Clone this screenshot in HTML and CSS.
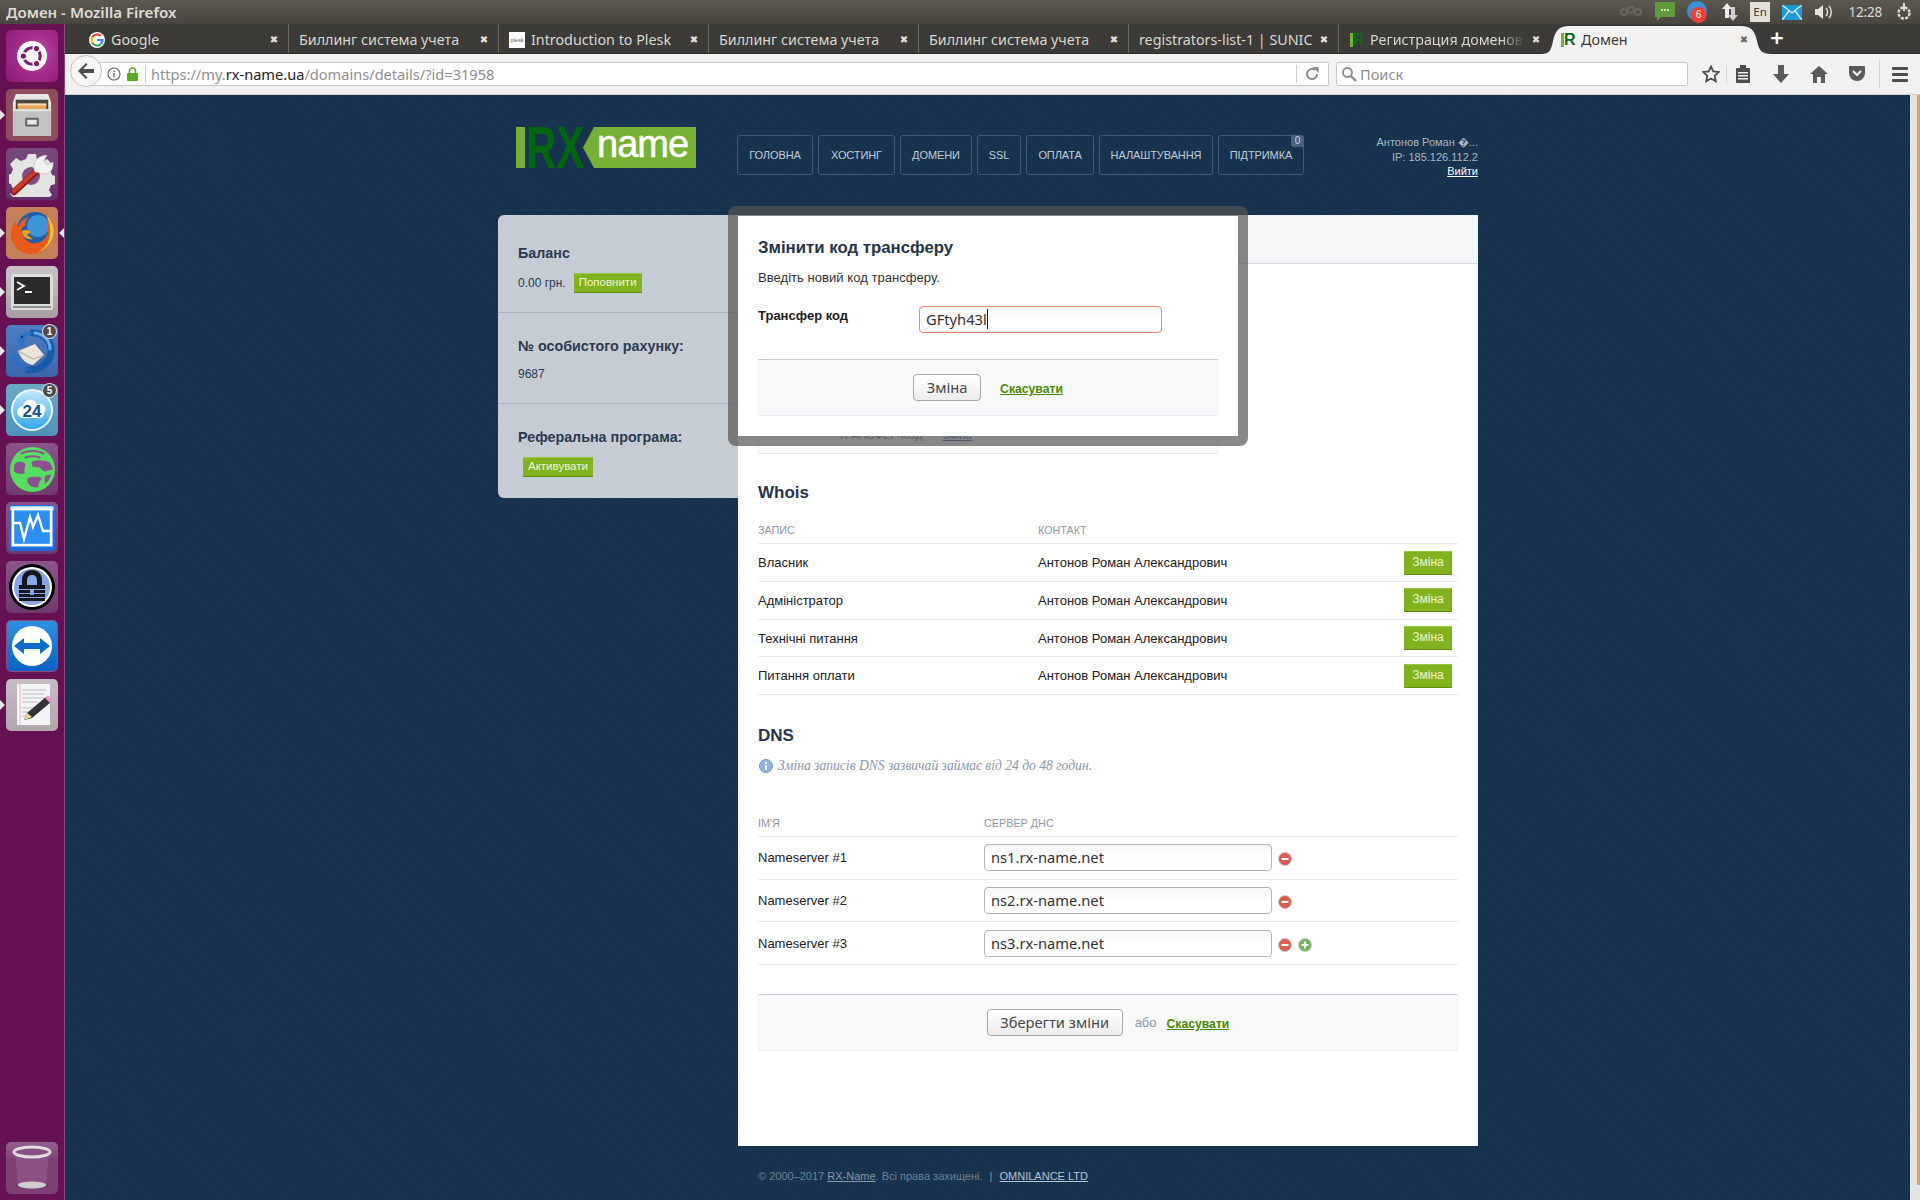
FILE: index.html
```html
<!DOCTYPE html>
<html lang="uk">
<head>
<meta charset="utf-8">
<title>Домен</title>
<link rel="stylesheet" href="styles.css">
</head>
<body>
<div class="desktop">
  <header class="topbar">
    <div class="wintitle">Домен - Mozilla Firefox</div>
    <div class="tray">
      <svg class="tray-i t-link" width="24" height="16" viewBox="0 0 24 16"><g fill="none" stroke="#6f6d66" stroke-width="2"><circle cx="5" cy="8" r="3"/><circle cx="12" cy="6" r="3"/><circle cx="19" cy="8" r="3"/></g></svg>
      <svg class="tray-i t-chat" width="20" height="22" viewBox="0 0 20 22"><path d="M0 1h20v15H6l-4 4v-4H0z" fill="#5f9a3c"/><g fill="#cfe6a8"><rect x="6" y="8" width="2" height="2"/><rect x="9" y="8" width="2" height="2"/><rect x="12" y="8" width="2" height="2"/></g></svg>
      <div class="tray-i t-bubble"><svg width="20" height="22" viewBox="0 0 20 22"><circle cx="10" cy="10" r="10" fill="#3a8fd8"/><circle cx="11.500" cy="14" r="8" fill="#ee4035"/></svg><span class="bubble-num">6</span></div>
      <svg class="tray-i t-arrows" width="18" height="20" viewBox="0 0 18 20"><path d="M6 1l5 6H8v9H4V7H1z" fill="#eee"/><path d="M12 19l-5-6h3V5h4v8h3z" fill="#cfcfcf"/></svg>
      <div class="tray-i t-lang">En</div>
      <svg class="tray-i t-mail" width="20" height="15" viewBox="0 0 20 15"><rect width="20" height="15" fill="#1d9ad6"/><path d="M0 0l10 8 10-8M0 15l7-9M20 15l-7-9" fill="none" stroke="#dff3fb" stroke-width="1.300"/></svg>
      <svg class="tray-i t-vol" width="20" height="18" viewBox="0 0 20 18"><path d="M1 6h3l5-4v14l-5-4H1z" fill="#e6e3dc"/><path d="M12 5c2 2 2 6 0 8M15 3c3 3 3 9 0 12" fill="none" stroke="#dfdbd2" stroke-width="1.500"/></svg>
      <div class="clock">12:28</div>
      <svg class="tray-i t-power" width="18" height="18" viewBox="0 0 18 18"><circle cx="9" cy="10" r="5.500" fill="none" stroke="#dfdbd2" stroke-width="2.500" stroke-dasharray="3 1.300"/><rect x="8" y="0" width="2" height="8" fill="#dfdbd2"/></svg>
    </div>
  </header>

  <div class="workspace">
    <nav class="launcher">
      <div class="tile tile-ubuntu"><svg width="30" height="30" viewBox="0 0 40 40"><circle cx="20" cy="20" r="20" fill="#fff"/><circle cx="20" cy="20" r="11" fill="none" stroke="#7a1e68" stroke-width="4"/><g fill="#7a1e68" stroke="#fff" stroke-width="2"><circle cx="8.500" cy="20" r="4.500"/><circle cx="26" cy="10" r="4.500"/><circle cx="26" cy="30" r="4.500"/></g></svg></div>
      <div class="tile tile-files pip-l"><svg width="42" height="44" viewBox="0 0 44 46"><path d="M5 1h34l3 9v33H2V10z" fill="#e6e6e4"/><rect x="5" y="7" width="34" height="13" fill="#4a4340"/><rect x="7" y="11" width="30" height="8" fill="#e9a65c"/><rect x="7" y="11" width="30" height="2" fill="#f6ddb3"/><path d="M2 17h40v28H2z" fill="#c2c2c0"/><path d="M2 17h40v2H2z" fill="#e2e2e0"/><rect x="15" y="26" width="14" height="9" rx="1" fill="#5f5f5d"/><rect x="17" y="28" width="10" height="5" fill="#e8e8e6"/></svg></div>
      <div class="tile tile-settings"><svg width="46" height="46" viewBox="0 0 46 46"><path d="M19 3h8l1 6 5 2 5-3 6 6-3 5 2 5 4 1v8l-5 1-2 5 3 5-6 5-5-3-5 2-1 4h-8l-1-4-5-2-5 3-6-6 3-5-2-5-5-1v-8l5-1 2-5-3-5 6-6 5 3 5-2z" fill="#e4e4e2"/><circle cx="22" cy="25" r="9" fill="#7f5182"/><path d="M5 41L30 18" stroke="#8f1f1a" stroke-width="6.500" stroke-linecap="round"/><path d="M5 40L30 17" stroke="#cf3a30" stroke-width="4" stroke-linecap="round"/><path d="M26 21c-3-6 0-14 7-16l5-1-3 6 3 4 6-3c1 7-3 12-9 12z" fill="#f2f2f0" stroke="#b5b5b3" stroke-width=".6"/></svg></div>
      <div class="tile tile-firefox pip-l pip-r"><svg width="46" height="46" viewBox="0 0 46 46"><circle cx="26" cy="20" r="18" fill="#1f5ea8"/><circle cx="29" cy="16" r="11" fill="#3f94d6"/><path d="M37 3c7 6 9 15 7 23-3 11-12 18-22 18C11 44 2 35 2 24c0-5 2-10 5-13 0 3 1 5 2 6 2-5 6-9 11-10-3 3-4 6-4 9-3 1-4 3-3 7 1 6 7 11 14 10 8-1 12-7 12-13 0-7-1-12-2-17z" fill="#e85b1d"/><path d="M38 5c6 7 8 15 6 21-2 8-8 14-15 16 7-4 11-10 12-17 1-7-1-13-3-20z" fill="#f8c22a"/><path d="M13 21c3-2 7-1 9 1l-4 3 6 4c-6 1-11-2-11-8z" fill="#f49d20"/></svg></div>
      <div class="tile tile-terminal pip-l"><svg width="42" height="36" viewBox="0 0 42 36"><rect width="42" height="36" rx="2" fill="#dcdcda"/><rect x="3" y="3" width="36" height="27" fill="#2a2a29"/><rect x="2" y="32" width="38" height="2" fill="#8d8d8b"/><path d="M6 8l7 4-7 4" fill="none" stroke="#fff" stroke-width="1.800"/><rect x="14" y="17" width="7" height="2" fill="#fff"/></svg></div>
      <div class="tile tile-thunder pip-l"><svg width="46" height="46" viewBox="0 0 46 46"><path d="M24 5c11 0 18 8 18 18S33 42 20 42" fill="none" stroke="#175aa8" stroke-width="7" stroke-linecap="round"/><path d="M26 5c9 1 15 8 15 16" fill="none" stroke="#6bace6" stroke-width="3" stroke-linecap="round"/><path d="M5 24c2 9 9 16 18 18-9 2-18-5-20-13z" fill="#2470c2"/><path d="M9 23l17-7 9 11-11 10C17 36 12 31 9 23z" fill="#ece6d8"/><path d="M9 23l15 8 11-4" fill="none" stroke="#b9b2a0" stroke-width="1.200"/><path d="M7 11C11 5 18 3 25 5c-4 1-8 4-10 11l-2 3c-2-2-5-4-6-8z" fill="#2a76c8"/><circle cx="13" cy="9" r="1.200" fill="#0b2a55"/></svg><span class="count">1</span></div>
      <div class="tile tile-24 pip-l"><div class="round24"><svg class="cloud" width="32" height="22" viewBox="0 0 32 22"><path d="M8 21c-9 0-9-11-1-12 1-7 11-9 14-2 7-2 11 5 7 9 0 3-2 5-5 5z" fill="#fff"/></svg><span class="num24">24</span></div><span class="count">5</span></div>
      <div class="tile tile-tor"><svg width="47" height="47" viewBox="0 0 48 48"><circle cx="24" cy="24" r="23" fill="#56de62"/><g fill="#8d5092"><path d="M6 18c5-3 9-2 11 1-1 3-2 6-1 9-4 1-8 0-11-2 0-3 0-6 1-8zM23 16c6-2 13-2 19 1l3 7-9 2-5-4-7-1zM19 33c5-2 11-2 15 0-3 3-4 5-4 9-4 0-7 0-9-2-2-2-3-4-2-7zM37 30l6-1c-1 4-3 7-6 10-1-3-1-6 0-9z"/></g><g fill="none" stroke="#8d5092" stroke-width="2"><path d="M12 8c6-4 18-4 24 0M16 12c5-2 12-2 16 0"/></g></svg></div>
      <div class="tile tile-task"><svg width="46" height="46" viewBox="0 0 46 46"><rect width="46" height="46" rx="3" fill="#1f6be0"/><rect x="1" y="1" width="44" height="5" rx="2" fill="#a9d4fb"/><rect x="4" y="4" width="38" height="36" fill="none" stroke="#fff" stroke-width="3"/><rect x="5.500" y="5.500" width="35" height="33" fill="#2a8ff0"/><path d="M5 18h6l4 16 6-22 3 10 5-12 5 16h7" fill="none" stroke="#fff" stroke-width="2.400"/></svg></div>
      <div class="tile tile-keepass"><svg width="48" height="48" viewBox="0 0 48 48"><circle cx="24" cy="24" r="23" fill="#000"/><circle cx="24" cy="24" r="20" fill="#fff"/><circle cx="24" cy="24" r="18" fill="#8aa4e8"/><path d="M14 23v-6c0-6 4-10 10-10s10 4 10 10v6h-5v-6c0-3-2-5-5-5s-5 2-5 5v6z" fill="#15171f"/><g fill="#15171f"><rect x="11" y="22" width="26" height="4"/><rect x="11" y="27" width="26" height="3"/><rect x="11" y="31" width="26" height="3"/><rect x="11" y="35" width="26" height="3"/></g><rect x="22" y="26" width="4" height="6" fill="#8aa4e8"/></svg></div>
      <div class="tile tile-tv"><svg width="42" height="42" viewBox="0 0 42 42"><circle cx="21" cy="21" r="20" fill="#fff"/><path d="M3 21l10-8v5h16v-5l10 8-10 8v-5H13v5z" fill="#0e6ccc"/></svg></div>
      <div class="tile tile-notes pip-l"><svg width="46" height="46" viewBox="0 0 46 46"><rect x="8" y="2" width="33" height="41" fill="#f4f3f6"/><g stroke="#bdbbc2" stroke-width="1"><path d="M13 8h24M13 12h22M13 16h24M13 20h16M13 26h20M13 30h14M13 34h8"/></g><path d="M11 2v41" stroke="#eab4b4"/><path d="M15 38l3-7 19-16 5 5-19 16z" fill="#333337"/><path d="M15 38l3-7 5 4z" fill="#f2dd8f"/><path d="M36 16l3-3 5 5-3 3z" fill="#e59bc8"/></svg></div>
      <div class="tile tile-trash"><svg width="40" height="46" viewBox="0 0 40 46"><path d="M3 7l3 33c4 5 24 5 28 0l3-33z" fill="#8a5284"/><ellipse cx="20" cy="40" rx="14" ry="3.500" fill="#cfcfcd"/><ellipse cx="20" cy="7" rx="18" ry="5" fill="none" stroke="#dededc" stroke-width="3"/></svg></div>
    </nav>

    <div class="window">
      <div class="tabstrip">
        <div class="tab"><svg class="fav" width="16" height="16" viewBox="0 0 16 16"><circle cx="8" cy="8" r="8" fill="#fff"/><g fill="none" stroke-width="2.200"><path d="M3.200 5.200A5.500 5.500 0 0 1 11.800 4" stroke="#ea4335"/><path d="M3.200 10.800a5.500 5.500 0 0 1 0-5.600" stroke="#fbbc05"/><path d="M11.800 12a5.500 5.500 0 0 1-8.600-1.200" stroke="#34a853"/><path d="M8 8h5.500a5.500 5.500 0 0 1-1.700 4" stroke="#4285f4"/></g></svg><span class="tab-title">Google</span><span class="tab-x">✖</span></div>
        <div class="tab"><span class="tab-title">Биллинг система учета</span><span class="tab-x">✖</span></div>
        <div class="tab"><span class="fav fav-plesk">plesk</span><span class="tab-title">Introduction to Plesk</span><span class="tab-x">✖</span></div>
        <div class="tab"><span class="tab-title">Биллинг система учета</span><span class="tab-x">✖</span></div>
        <div class="tab"><span class="tab-title">Биллинг система учета</span><span class="tab-x">✖</span></div>
        <div class="tab"><span class="tab-title">registrators-list-1 | SUNIC</span><span class="tab-x">✖</span></div>
        <div class="tab tab-last"><span class="fav fav-r"><i></i><b>R</b></span><span class="tab-title tab-fade">Регистрация доменов</span><span class="tab-x">✖</span></div>
        <div class="tab tab-active"><svg class="tab-shape" width="231" height="30" viewBox="0 0 231 30"><path d="M0 30c9 0 10-4 12-13C14 7 18 2 28 2h172c10 0 14 5 16 15 2 9 4 13 15 13z" fill="#f2f1ef"/></svg><span class="fav fav-r"><i></i><b>R</b></span><span class="tab-title">Домен</span><span class="tab-x">✖</span></div>
        <div class="tab-new">+</div>
      </div>

      <div class="toolbar">
        <div class="urlbar">
          <div class="backbtn"><svg width="18" height="18" viewBox="0 0 18 18"><path d="M9 1L1 9l8 8 1.500-1.500L6 11h11V7H6l4.500-4.500z" fill="#4d4d4d"/></svg></div>
          <svg class="url-i" width="14" height="14" viewBox="0 0 14 14"><circle cx="7" cy="7" r="6" fill="none" stroke="#6b6b6b" stroke-width="1.200"/><rect x="6.300" y="6" width="1.400" height="4.500" fill="#6b6b6b"/><rect x="6.300" y="3.500" width="1.400" height="1.500" fill="#6b6b6b"/></svg>
          <svg class="url-lock" width="11" height="14" viewBox="0 0 11 14"><path d="M2.500 6V4a3 3 0 0 1 6 0v2" fill="none" stroke="#5ca81f" stroke-width="1.600"/><rect y="6" width="11" height="8" rx="1" fill="#5ca81f"/></svg>
          <span class="url-sep"></span>
          <div class="url-text">https://my.<em>rx-name.ua</em>/domains/details/?id=31958</div>
          <span class="url-sep url-sep2"></span>
          <svg class="url-reload" width="14" height="14" viewBox="0 0 14 14"><path d="M12 7a5 5 0 1 1-2-4" fill="none" stroke="#8b8b8b" stroke-width="2"/><path d="M7.500 0h6v6z" fill="#8b8b8b"/></svg>
        </div>
        <div class="searchbar">
          <svg width="16" height="16" viewBox="0 0 16 16"><circle cx="6.500" cy="6.500" r="4.500" fill="none" stroke="#8b8b8b" stroke-width="1.800"/><path d="M10 10l5 5" stroke="#8b8b8b" stroke-width="2.400"/></svg>
          <span>Поиск</span>
        </div>
        <div class="tools">
          <svg class="tool t-star" width="18" height="18" viewBox="0 0 18 18"><path d="M9 1.500l2.300 5 5.400.6-4 3.700 1.100 5.400L9 13.500l-4.800 2.700 1.100-5.400-4-3.700 5.400-.6z" fill="none" stroke="#4d4d4d" stroke-width="1.800"/></svg>
          <span class="tool-sep"></span>
          <svg class="tool t-clip" width="16" height="18" viewBox="0 0 16 18"><rect x="1" y="3" width="14" height="15" rx="1" fill="#4d4d4d"/><rect x="5" y="0" width="6" height="5" fill="#4d4d4d"/><g fill="#f2f1ef"><rect x="3" y="7" width="10" height="1.500"/><rect x="3" y="10" width="10" height="1.500"/><rect x="3" y="13" width="10" height="1.500"/></g></svg>
          <svg class="tool t-down" width="16" height="18" viewBox="0 0 16 18"><path d="M5 0h6v9h5l-8 9-8-9h5z" fill="#5a5a5a"/></svg>
          <svg class="tool t-home" width="18" height="18" viewBox="0 0 18 18"><path d="M9 1l9 8h-3v9h-4v-6H7v6H3V9H0z" fill="#5a5a5a"/></svg>
          <svg class="tool t-pocket" width="16" height="16" viewBox="0 0 16 16"><path d="M1 0h14a1 1 0 0 1 1 1v6a8 8 0 0 1-16 0V1a1 1 0 0 1 1-1z" fill="#5a5a5a"/><path d="M4 5l4 4 4-4" fill="none" stroke="#f2f1ef" stroke-width="2.200"/></svg>
          <span class="tool-sep tool-sep2"></span>
          <div class="menu-btn"><i></i><i></i><i></i></div>
        </div>
      </div>

      <div class="pagearea">
        <main class="viewport">
          <div class="site">
            <div class="site-head">
              <div class="logo"><i class="logo-bar"></i><span class="logo-rx">RX</span><span class="logo-name">name</span></div>
              <ul class="mainnav">
                <li>ГОЛОВНА</li>
                <li>ХОСТИНГ</li>
                <li>ДОМЕНИ</li>
                <li>SSL</li>
                <li>ОПЛАТА</li>
                <li>НАЛАШТУВАННЯ</li>
                <li class="has-badge">ПІДТРИМКА<span class="nav-badge">0</span></li>
              </ul>
              <div class="userbox">
                <div>Антонов Роман �...</div>
                <div>IP: 185.126.112.2</div>
                <a class="logout">Вийти</a>
              </div>
            </div>

            <div class="site-body">
              <aside class="side">
                <section class="side-sec sec-1">
                  <h3>Баланс</h3>
                  <div class="side-row"><span>0.00 грн.</span><span class="gbtn">Поповнити</span></div>
                </section>
                <section class="side-sec sec-2">
                  <h3>№ особистого рахунку:</h3>
                  <div class="side-val">9687</div>
                </section>
                <section class="side-sec sec-3">
                  <h3>Реферальна програма:</h3>
                  <div class="side-row side-row-in"><span class="gbtn">Активувати</span></div>
                </section>
              </aside>

              <div class="content">
                <div class="content-strip"></div>
                <div class="content-in">
                  <div class="hidden-box"><span class="hb-label">ТРАНСФЕР КОД</span><a class="hb-link">Зміна</a></div>

                  <h2 class="sec-title">Whois</h2>
                  <div class="row row-head row-whois"><span class="c1">ЗАПИС</span><span class="c2">КОНТАКТ</span></div>
                  <div class="row row-whois"><span class="c1">Власник</span><span class="c2">Антонов Роман Александрович</span><span class="gbtn gbtn-lg">Зміна</span></div>
                  <div class="row row-whois"><span class="c1">Адміністратор</span><span class="c2">Антонов Роман Александрович</span><span class="gbtn gbtn-lg">Зміна</span></div>
                  <div class="row row-whois"><span class="c1">Технічні питання</span><span class="c2">Антонов Роман Александрович</span><span class="gbtn gbtn-lg">Зміна</span></div>
                  <div class="row row-whois"><span class="c1">Питання оплати</span><span class="c2">Антонов Роман Александрович</span><span class="gbtn gbtn-lg">Зміна</span></div>

                  <h2 class="sec-title sec-dns">DNS</h2>
                  <div class="note"><svg width="14" height="14" viewBox="0 0 14 14"><circle cx="7" cy="7" r="6.500" fill="#8fb5dc" stroke="#6f9cc9"/><rect x="6" y="6" width="2" height="5" fill="#fff"/><rect x="6" y="3" width="2" height="2" fill="#fff"/></svg><span>Зміна записів DNS зазвичай займає від 24 до 48 годин.</span></div>
                  <div class="row row-head row-dns"><span class="d1">ІМ'Я</span><span class="d2">СЕРВЕР ДНС</span></div>
                  <div class="row row-dns"><span class="d1">Nameserver #1</span><div class="field field-ns">ns1.rx-name.net</div><svg class="rm" width="14" height="14" viewBox="0 0 14 14"><circle cx="7" cy="7" r="6.500" fill="#df5a50" stroke="#c9c9c9"/><rect x="3.500" y="6" width="7" height="2" fill="#fff"/></svg></div>
                  <div class="row row-dns"><span class="d1">Nameserver #2</span><div class="field field-ns">ns2.rx-name.net</div><svg class="rm" width="14" height="14" viewBox="0 0 14 14"><circle cx="7" cy="7" r="6.500" fill="#df5a50" stroke="#c9c9c9"/><rect x="3.500" y="6" width="7" height="2" fill="#fff"/></svg></div>
                  <div class="row row-dns"><span class="d1">Nameserver #3</span><div class="field field-ns">ns3.rx-name.net</div><svg class="rm" width="14" height="14" viewBox="0 0 14 14"><circle cx="7" cy="7" r="6.500" fill="#df5a50" stroke="#c9c9c9"/><rect x="3.500" y="6" width="7" height="2" fill="#fff"/></svg><svg class="add" width="14" height="14" viewBox="0 0 14 14"><circle cx="7" cy="7" r="6.500" fill="#6db35a" stroke="#c9c9c9"/><rect x="3.500" y="6" width="7" height="2" fill="#fff"/><rect x="6" y="3.500" width="2" height="7" fill="#fff"/></svg></div>

                  <div class="actions actions-main">
                    <span class="wbtn">Зберегти зміни</span><span class="or">або</span><a class="cancel">Скасувати</a>
                  </div>
                </div>
              </div>

              <div class="modal">
                <h2 class="modal-title">Змінити код трансферу</h2>
                <p class="modal-text">Введіть новий код трансферу.</p>
                <div class="modal-row"><label>Трансфер код</label><div class="field field-focus"><span class="caret">GFtyh43l</span></div></div>
                <div class="actions actions-modal">
                  <span class="wbtn wbtn-s">Зміна</span><a class="cancel">Скасувати</a>
                </div>
              </div>
            </div>

            <footer class="site-foot">© 2000–2017 <a class="foot-a">RX-Name</a>. Всі права захищені. <span class="foot-sep">|</span> <a class="foot-b">OMNILANCE LTD</a></footer>
          </div>
        </main>
        <div class="vscroll"><div class="vthumb"></div></div>
      </div>
    </div>
  </div>
</div>
</body>
</html>
```
FILE: styles.css
```css
* { box-sizing: border-box; }
html, body { margin: 0; padding: 0; height: 100%; overflow: hidden; }
body { font-family: "Liberation Sans", Arial, sans-serif; font-size: 12px; color: #222; }
h2, h3, p, ul { margin: 0; padding: 0; }
ul { list-style: none; }

.desktop { width: 1920px; height: 1200px; display: flex; flex-direction: column; overflow: hidden; }

/* Top panel */
.topbar { height: 24px; flex: none; display: flex; align-items: center; justify-content: space-between; background: linear-gradient(#5b584f, #47453f); color: #dfdbd2; }
.wintitle { font-family: "Noto Sans", sans-serif; font-weight: 600; font-size: 15.100px; padding-left: 6px; white-space: nowrap; }
.tray { display: flex; align-items: center; height: 24px; width: 310px; padding-left: 9px; }
.tray-i { flex: none; display: block; }
.t-link { margin-right: 12px; opacity: .75; }
.t-chat { margin-right: 12px; }
.t-bubble { position: relative; width: 20px; height: 22px; margin-right: 14px; }
.t-bubble svg { display: block; }
.bubble-num { position: absolute; left: 6px; top: 8px; font-size: 10px; line-height: 12px; color: #fff; width: 11px; text-align: center; }
.t-arrows { margin-right: 11px; }
.t-lang { width: 20px; height: 20px; background: #e3e0d9; color: #3c3b37; font-family: "Noto Sans", sans-serif; font-size: 11.500px; line-height: 20px; text-align: center; margin-right: 12px; }
.t-mail { margin-right: 12px; }
.t-vol { margin-right: 4px; }
.clock { font-family: "Noto Sans", sans-serif; font-size: 13.500px; color: #dfdbd2; width: 44px; margin-right: 13px; letter-spacing: -.2px; text-align: right; }

.workspace { flex: 1; min-height: 0; display: flex; }

/* Launcher */
.launcher { width: 65px; flex: none; background: #651153; border-right: 1px solid #8d4a7e; display: flex; flex-direction: column; gap: 7px; padding: 6px 0 6px 6px; }
.tile { position: relative; width: 52px; height: 52px; flex: none; border-radius: 5px; display: flex; align-items: center; justify-content: center; }
.tile svg { display: block; }
.pip-l::before, .pip-r::after { content: ""; position: absolute; top: 21px; border-style: solid; border-width: 5px; border-color: transparent; }
.pip-l::before { left: -6px; border-left-color: #e8e3e7; border-right-width: 0; }
.pip-r::after { right: -6px; border-right-color: #e8e3e7; border-left-width: 0; }
.tile-ubuntu { background: radial-gradient(circle at 60% 45%, #c055a8 0, #a42c8c 45%, #8a1a74 100%); }
.tile-files { background: #8f4d5c; }
.tile-settings { background: linear-gradient(#7a4a7c, #64306a); }
.tile-firefox { background: #c28159; }
.tile-terminal { background: linear-gradient(#c9c2c6, #a89ea4); }
.tile-thunder { background: linear-gradient(#4f7cc2, #3c66ac); }
.tile-24 { background: linear-gradient(#6aa8c6, #4f93b8); }
.tile-tor { background: linear-gradient(#8a5488, #6f3a6d); }
.tile-task { background: linear-gradient(#8a5488, #6f3a6d); }
.tile-keepass { background: linear-gradient(#8a5488, #6f3a6d); }
.tile-tv { background: linear-gradient(#2f8fe0, #0a62c4); border: 1px solid #8d4a7e; }
.tile-notes { background: linear-gradient(#c6bcc2, #b2a6ad); }
.tile-trash { background: linear-gradient(#93618e, #7b3f74 35%); margin-top: auto; }
.count { position: absolute; right: 1px; top: -1px; width: 15px; height: 15px; border-radius: 50%; background: #4c4a4a; border: 1px solid #eee; color: #fff; font-size: 10px; font-weight: 700; line-height: 13px; text-align: center; }
.round24 { position: relative; width: 42px; height: 42px; border-radius: 50%; background: linear-gradient(#bfe6fa, #33a5e6); border: 2px solid #eef7fb; display: flex; align-items: center; justify-content: center; }
.cloud { position: absolute; left: 3px; top: 6px; }
.num24 { position: relative; margin-top: 3px; font-weight: 700; font-size: 17px; line-height: 18px; color: #14558f; }

/* Browser window */
.window { flex: 1; min-width: 0; display: flex; flex-direction: column; }
.tabstrip { height: 30px; flex: none; background: #3c3b37; display: flex; padding-left: 14px; border-bottom: 1px solid #2f2e2b; }
.tab { width: 210px; height: 29px; flex: none; display: flex; align-items: center; padding: 2px 7px 0 10px; border-right: 1px solid #6c6b66; color: #d9d7d0; font-family: "Noto Sans", sans-serif; font-size: 14.300px; position: relative; }
.tab-title { flex: 1; min-width: 0; overflow: hidden; white-space: nowrap; }
.tab-fade { -webkit-mask-image: linear-gradient(90deg, #000 82%, transparent 98%); mask-image: linear-gradient(90deg, #000 82%, transparent 98%); }
.tab-x { width: 14px; flex: none; font-family: "DejaVu Sans", sans-serif; font-size: 10px; line-height: 14px; text-align: center; color: #e5e3de; }
.fav { width: 16px; height: 16px; flex: none; margin-right: 6px; display: block; }
.fav-plesk { background: #fff; color: #555; font-family: "Liberation Sans", sans-serif; font-size: 5.500px; line-height: 16px; text-align: center; overflow: hidden; }
.fav-r { position: relative; width: 14px; margin-right: 6px; margin-left: 1px; }
.fav-r i { position: absolute; left: 0; top: 1px; width: 3px; height: 14px; background: #76b136; }
.fav-r b { position: absolute; left: 3px; top: 0; font-family: "Liberation Sans", sans-serif; font-size: 16px; line-height: 16px; color: #0a6a1a; }
.tab-last { border-right: 0; width: 211px; }
.tab-active { width: 208px; border-right: 0; color: #3c3b37; }
.tab-active .tab-x { color: #6e6e6a; }
.tab-shape { position: absolute; left: -9px; top: 0; z-index: 0; }
.tab-active > *:not(.tab-shape) { position: relative; z-index: 1; }
.tab-new { color: #fff; font-family: "Noto Sans", sans-serif; font-size: 24px; font-weight: 600; line-height: 28px; margin-left: 12px; }

.toolbar { height: 41px; flex: none; background: #f2f1ef; border-bottom: 1px solid #cfcecb; display: flex; align-items: center; padding-left: 5px; }
.urlbar { position: relative; width: 1244px; height: 24px; margin-left: 15px; background: #fff; border: 1px solid #c9c8c5; border-radius: 0 2px 2px 0; display: flex; align-items: center; padding-left: 20px; }
.backbtn { position: absolute; left: -16px; top: -8px; width: 32px; height: 32px; border-radius: 50%; background: #f7f6f5; border: 1px solid #c4c3c0; display: flex; align-items: center; justify-content: center; }
.backbtn svg { display: block; }
.url-i { margin-left: 1px; flex: none; }
.url-lock { margin-left: 6px; flex: none; }
.url-sep { width: 1px; height: 18px; background: #cfcecb; margin-left: 7px; flex: none; }
.url-text { font-family: "Noto Sans", sans-serif; font-size: 14.600px; color: #8f8f8f; margin-left: 5px; flex: 1; white-space: nowrap; }
.url-text em { font-style: normal; color: #222; }
.url-sep2 { margin: 0 8px 0 0; }
.url-reload { margin-right: 9px; flex: none; }
.searchbar { width: 352px; height: 24px; margin-left: 7px; flex: none; background: #fff; border: 1px solid #c9c8c5; border-radius: 2px; display: flex; align-items: center; padding-left: 4px; gap: 3px; font-family: "Noto Sans", sans-serif; font-size: 14.600px; color: #8f8f8f; }
.searchbar svg { display: block; flex: none; }
.tools { display: flex; align-items: center; margin-left: 14px; height: 40px; }
.tool { display: block; flex: none; }
.t-star { margin-right: 6px; }
.tool-sep { width: 1px; height: 18px; background: #d4d3d0; flex: none; margin-right: 8px; }
.t-clip { margin-right: 22px; }
.t-down { margin-right: 21px; }
.t-home { margin-right: 21px; }
.t-pocket { margin-right: 14px; }
.tool-sep2 { height: 30px; margin-right: 12px; }
.menu-btn { display: flex; flex-direction: column; gap: 3px; width: 16px; }
.menu-btn i { display: block; height: 3px; background: #4d4d4d; border-radius: 1px; }

/* Page */
.pagearea { flex: 1; min-height: 0; display: flex; }
.viewport { flex: 1; min-width: 0; padding-left: 1px; background-color: #17324f; background-image: repeating-linear-gradient(45deg, rgba(255,255,255,.014) 0 1px, transparent 1px 3px), repeating-linear-gradient(-45deg, rgba(0,0,0,.03) 0 1px, transparent 1px 4px); }
.vscroll { width: 10px; flex: none; background: #e4e4e4; padding-left: 7px; }
.vthumb { width: 3px; height: 1090px; background: #f09668; }
.site { width: 980px; margin: 0 auto; }

.site-head { height: 120px; display: flex; align-items: flex-start; padding-left: 18px; }
.logo { width: 180px; height: 41px; margin-top: 32px; flex: none; display: flex; }
.logo-bar { width: 9px; height: 41px; background: #76b136; flex: none; }
.logo-rx { font-weight: 700; font-size: 60px; line-height: 41px; height: 41px; color: #00670f; width: 59px; flex: none; margin-left: 1px; transform: scaleX(.7); transform-origin: left center; }
.logo-name { flex: 1; height: 41px; background: #76b136; color: #fff; font-size: 38px; line-height: 34px; letter-spacing: -1px; padding-left: 14px; clip-path: polygon(11px 0, 100% 0, 100% 100%, 11px 100%, 0 50%); margin-left: -2px; -webkit-text-stroke: .5px #fff; }
.mainnav { display: grid; grid-template-columns: 76px 77px 72px 44px 68px 114px 86px; gap: 5px; margin-top: 40px; margin-left: 41px; flex: none; }
.mainnav li { height: 40px; line-height: 38px; text-align: center; border: 1px solid #3f5a7a; border-radius: 3px; font-size: 11px; letter-spacing: -.1px; color: #c2ccd6; position: relative; white-space: nowrap; }
.nav-badge { position: absolute; right: -1px; top: -1px; width: 13px; height: 12px; background: #4b627e; color: #c9d3dd; font-size: 10px; line-height: 12px; text-align: center; border-radius: 0 3px 0 3px; }
.userbox { margin-left: auto; margin-top: 40px; text-align: right; font-size: 11px; line-height: 14.500px; color: #aab6c3; white-space: nowrap; }
.logout { color: #fff; text-decoration: underline; }

.site-body { display: flex; align-items: flex-start; position: relative; }
.side { width: 240px; flex: none; background: #c5ccd4; border-radius: 6px 0 0 6px; color: #2a3b50; }
.side-sec { padding-left: 20px; border-bottom: 1px solid #a9b3c2; }
.side-sec h3 { font-size: 14.300px; line-height: 20px; font-weight: 700; color: #2a3b50; white-space: nowrap; }
.sec-1 { height: 98px; padding-top: 28px; }
.sec-2 { height: 91px; padding-top: 23px; }
.sec-3 { height: 94px; padding-top: 23px; border-bottom: 0; }
.side-row { display: flex; align-items: center; gap: 8px; margin-top: 10px; font-size: 12px; }
.side-row-in { padding-left: 5px; }
.side-val { margin-top: 8px; font-size: 12px; line-height: 20px; }
.gbtn { display: inline-block; height: 20px; padding: 0 5px; background: #82b21e; border-bottom: 1px solid #5f8d12; border-top: 1px solid #9cc64a; color: #eef6d8; font-size: 11.500px; line-height: 17px; white-space: nowrap; }
.gbtn-lg { width: 48px; height: 24px; padding: 0; font-size: 12px; line-height: 21px; text-align: center; margin-left: auto; margin-right: 6px; }

.content { width: 740px; height: 931px; flex: none; background: #fff; }
.content-strip { height: 49px; background: #f4f6f8; border-bottom: 1px solid #d8dce2; }
.content-in { padding: 19px 20px 0; }
.hidden-box { width: 460px; height: 171px; border: 1px solid #e8ebee; border-top: 0; display: flex; align-items: flex-end; padding: 0 0 11px 79px; font-size: 11px; color: #777; gap: 20px; line-height: 14px; }
.hb-link { color: #2f5f8a; text-decoration: underline; }
.sec-title { font-size: 17px; line-height: 20px; font-weight: 700; color: #26364a; margin-top: 29px; margin-bottom: -1px; }
.sec-dns { margin-top: 31px; }
.row { display: flex; align-items: center; border-bottom: 1px solid #e8ebee; font-size: 13px; color: #222; width: 700px; white-space: nowrap; }
.row-whois { height: 37.750px; padding-top: .5px; }
.row-dns { height: 42.670px; }
.row-head { color: #8d97a3; font-size: 10.800px; align-items: flex-end; padding-bottom: 6px; line-height: 14px; }
.row-head.row-whois { height: 42px; }
.row-head.row-dns { height: 61px; }
.c1 { width: 280px; flex: none; }
.c2 { flex: none; }
.d1 { width: 226px; flex: none; }
.d2 { flex: none; }
.note { height: 20px; margin-top: 11px; display: flex; align-items: center; gap: 5px; font-family: "Liberation Serif", serif; font-style: italic; font-size: 13.600px; color: #8a97a8; white-space: nowrap; }
.note svg { margin-left: 1px; flex: none; }
.field { height: 27px; background: linear-gradient(#f7f7f7, #fff 60%); border: 1px solid #b4b4b4; border-radius: 4px; font-family: "Noto Sans", sans-serif; font-size: 14.700px; line-height: 25px; color: #333; padding-left: 6px; }
.field-ns { width: 288px; flex: none; }
.rm { margin-left: 6px; margin-top: 3px; flex: none; }
.add { margin-left: 6px; margin-top: 3px; flex: none; }

.actions { display: flex; align-items: center; justify-content: center; background: #f7f8fa; border: 1px solid #eceef1; border-top: 1px solid #c6ccd6; }
.actions-main { width: 700px; height: 57px; margin-top: 29px; }
.wbtn { display: block; height: 27px; width: 136px; text-align: center; background: linear-gradient(#fff, #ececec); border: 1px solid #a8a8a8; border-radius: 4px; font-family: "Noto Sans", sans-serif; font-size: 14.700px; line-height: 25px; color: #4a4a4a; white-space: nowrap; }
.wbtn-s { width: 68px; }
.or { font-size: 13px; color: #8d97a3; margin: 0 10px 0 12px; }
.cancel { color: #4a8a00; font-weight: 700; font-size: 12.200px; text-decoration: underline; margin-top: 3px; }

.modal { position: absolute; left: 230px; top: -9px; width: 520px; height: 240px; border: 10px solid rgba(85,85,85,.7); border-radius: 8px; background: #fff; background-clip: padding-box; padding: 22px 20px 0; }
.modal-title { font-size: 16.800px; line-height: 20px; font-weight: 700; color: #26364a; white-space: nowrap; }
.modal-text { margin-top: 10px; font-size: 13.100px; line-height: 20px; color: #333; white-space: nowrap; }
.modal-row { display: flex; align-items: flex-start; margin-top: 18px; }
.modal-row label { width: 161px; flex: none; font-size: 13px; font-weight: 700; line-height: 20px; color: #222; }
.field-focus { width: 243px; height: 27px; border-color: #e98a6e; }
.caret { border-right: 1px solid #222; display: inline-block; line-height: 20px; }
.actions-modal { width: 460px; height: 57px; margin-top: 26px; gap: 19px; }

.site-foot { padding: 20px 0 0 260px; line-height: 20px; font-size: 11px; color: #6f8196; white-space: nowrap; }
.foot-a { color: #8797a9; text-decoration: underline; }
.foot-sep { margin: 0 4px; color: #8797a9; }
.foot-b { color: #b5c4d3; text-decoration: underline; }
```
